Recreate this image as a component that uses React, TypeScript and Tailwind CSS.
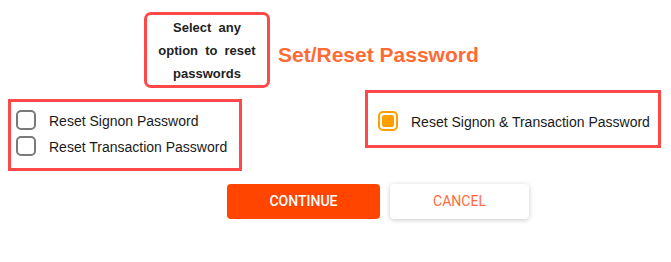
import { useState } from 'react';

type Choice = 'signon' | 'transaction' | 'both';

function Box({ checked, onClick }: { checked: boolean; onClick: () => void }) {
  return (
    <button
      onClick={onClick}
      className={`w-[20px] h-[20px] shrink-0 rounded-[5px] border-2 p-[2px] bg-white ${
        checked ? 'border-[#ffa000]' : 'border-[#7a7a7a]'
      }`}
    >
      {checked && <span className="block w-full h-full rounded-[2px] bg-[#ffa000]" />}
    </button>
  );
}

export default function App() {
  const [picked, setPicked] = useState<Choice[]>(['both']);

  const toggle = (c: Choice) =>
    setPicked(p => (p.includes(c) ? p.filter(x => x !== c) : [...p, c]));

  return (
    <div className="w-[671px] h-[262px] bg-white font-['Liberation_Sans',Arial,sans-serif] text-[#1a1a1a]">
      {/* Header */}
      <div className="flex items-center pl-[144px] pt-[12px]">
        <div className="w-[126px] h-[76px] border-[3px] border-[#ff4848] rounded-[7px] px-[8px] flex items-center justify-center text-center text-[13px] font-bold leading-[23px] [word-spacing:3.5px] text-[#222]">
          Select any option to reset passwords
        </div>
        <h1 className="ml-[8px] mt-[10px] text-[21px] font-bold text-[#ff6b35]">Set/Reset Password</h1>
      </div>

      {/* Options */}
      <div className="flex items-start">
        <div className="ml-[8px] mt-[11px] w-[234px] h-[72px] border-[3px] border-[#ff4848] pl-[5px] pt-[8px] flex flex-col gap-[6px] text-[14px] leading-[18px]">
          <label className="flex items-center gap-[13px]">
            <Box checked={picked.includes('signon')} onClick={() => toggle('signon')} />
            <span className="pt-[2px]">Reset Signon Password</span>
          </label>
          <label className="flex items-center gap-[13px]">
            <Box checked={picked.includes('transaction')} onClick={() => toggle('transaction')} />
            <span className="pt-[2px]">Reset Transaction Password</span>
          </label>
        </div>

        <div className="ml-auto mr-[10px] mt-[2px] w-[296px] h-[58px] border-[3px] border-[#ff4848] pl-[10px] pt-[4px] flex items-center text-[14px] leading-[18px]">
          <label className="flex items-center gap-[13px]">
            <Box checked={picked.includes('both')} onClick={() => toggle('both')} />
            <span className="pt-[2px]">Reset Signon &amp; Transaction Password</span>
          </label>
        </div>
      </div>

      {/* Actions */}
      <div className="flex gap-[10px] pl-[227px] mt-[13px] font-['Roboto',sans-serif] text-[14px]">
        <button className="w-[153px] h-[35px] rounded-[4px] bg-[#ff4500] text-white font-medium">CONTINUE</button>
        <button className="w-[139px] h-[35px] rounded-[4px] bg-white text-[#ff6a3d] shadow-[0_1px_5px_rgba(0,0,0,0.22)]">
          CANCEL
        </button>
      </div>
    </div>
  );
}
